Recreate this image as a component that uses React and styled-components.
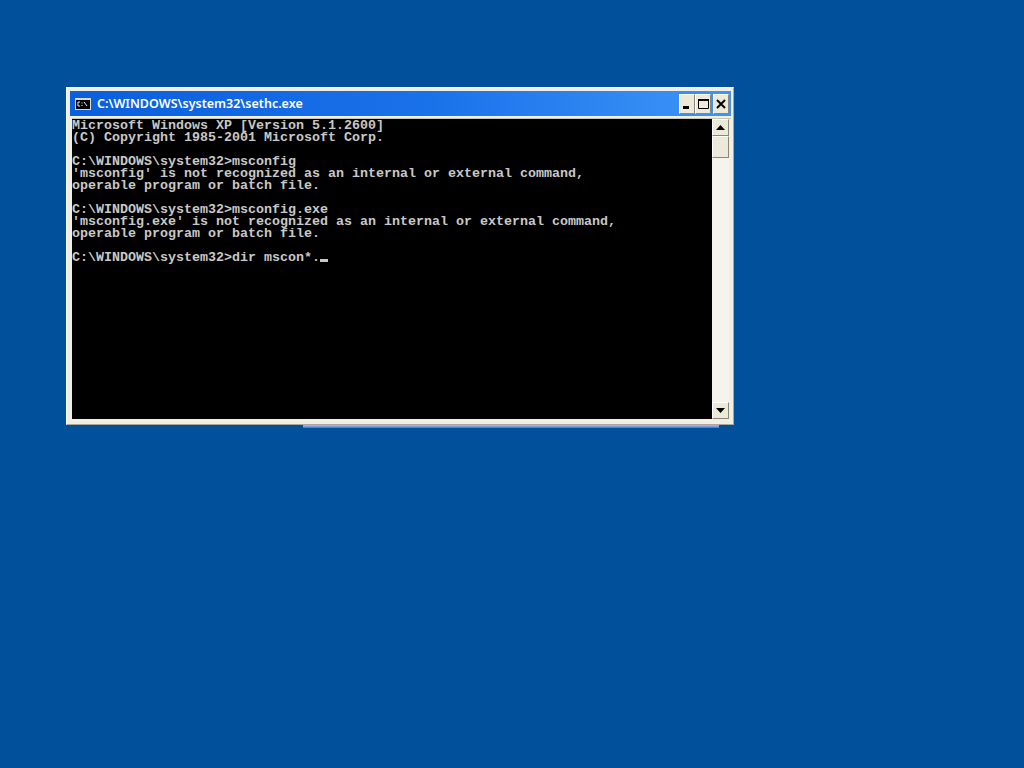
import React from 'react';
import styled, { createGlobalStyle } from 'styled-components';

const CONSOLE_LINES = [
  'Microsoft Windows XP [Version 5.1.2600]',
  '(C) Copyright 1985-2001 Microsoft Corp.',
  '',
  'C:\\WINDOWS\\system32>msconfig',
  "'msconfig' is not recognized as an internal or external command,",
  'operable program or batch file.',
  '',
  'C:\\WINDOWS\\system32>msconfig.exe',
  "'msconfig.exe' is not recognized as an internal or external command,",
  'operable program or batch file.',
  '',
];

const GlobalStyle = createGlobalStyle`
  html, body {
    margin: 0;
    padding: 0;
    background: #00509c;
  }
`;

const Desktop = styled.div`
  position: relative;
  width: 1024px;
  height: 768px;
  overflow: hidden;
  background: #00509c;
`;

const BehindStrip = styled.div`
  position: absolute;
  left: 303px;
  top: 425px;
  width: 416px;
  height: 3px;
  background: linear-gradient(#aebfee, #8097e4 50%, #4f6cd6);
`;

const Window = styled.div`
  position: absolute;
  left: 66px;
  top: 87px;
  width: 668px;
  height: 338px;
  box-sizing: border-box;
  padding: 3px 2px 0 3px;
  display: flex;
  flex-direction: column;
  background: #f1efe4;
  border-top: 1px solid #f8f7f0;
  border-left: 1px solid #fbfbf8;
  border-right: 1px solid #aca899;
  border-bottom: 1px solid #aca899;
`;

const TitleBar = styled.div`
  height: 25px;
  flex: none;
  display: flex;
  align-items: center;
  padding: 0 2px 0 5px;
  background: linear-gradient(90deg, #0a5fdc 0%, #1a72ea 55%, #3d95f8 100%);
`;

const TitleText = styled.span`
  margin-left: 6px;
  flex: 1;
  color: #fff;
  font: 600 12.5px/25px 'Noto Sans', 'Liberation Sans', sans-serif;
  white-space: nowrap;
`;

const ButtonGroup = styled.div`
  display: flex;
  align-items: center;
`;

const WinButton = styled.div`
  box-sizing: border-box;
  width: 16px;
  height: 20px;
  margin-left: ${(p) => p.$gap || 0}px;
  display: flex;
  align-items: center;
  justify-content: center;
  background: #ece9d8;
  border-top: 1px solid #fff;
  border-left: 1px solid #fff;
  border-right: 1px solid #8a8778;
  border-bottom: 1px solid #8a8778;
`;

const Body = styled.div`
  margin-top: 2px;
  margin-left: 2px;
  display: flex;
  border-top: 1px solid #c9c6b8;
`;

const ConsoleArea = styled.div`
  box-sizing: border-box;
  width: 640px;
  height: 300px;
  padding-top: 1px;
  flex: none;
  background: #000;
`;

const ConsoleLine = styled.div`
  height: 12px;
  color: #c8c8c8;
  font: 700 13.33px/12px 'Liberation Mono', 'Courier New', monospace;
  white-space: pre;
`;

const Cursor = styled.span`
  display: inline-block;
  width: 8px;
  height: 3px;
  background: #c8c8c8;
  vertical-align: -1px;
`;

const ScrollBar = styled.div`
  width: 17px;
  height: 300px;
  flex: none;
  display: flex;
  flex-direction: column;
  background-color: #f4f3ee;
  background-image: radial-gradient(#dcd9cb 40%, transparent 45%);
  background-size: 2px 2px;
`;

const ScrollButton = styled.div`
  box-sizing: border-box;
  width: 17px;
  height: 17px;
  flex: none;
  display: flex;
  align-items: center;
  justify-content: center;
  background: #ece9d8;
  border-top: 1px solid #fff;
  border-left: 1px solid #fff;
  border-right: 1px solid #8a8778;
  border-bottom: 1px solid #8a8778;
`;

const ScrollThumb = styled(ScrollButton)`
  height: 22px;
`;

const ScrollSpace = styled.div`
  flex: 1;
`;

const ConsoleIcon = () => (
  <svg width="16" height="12" viewBox="0 0 16 12">
    <rect x="0" y="0" width="16" height="12" fill="#d8d8d8" />
    <rect x="1" y="2" width="14" height="9" fill="#000" />
    <path d="M5 4H3V8H5M7 4.5V5.5M7 7V8M9 4L12 8" stroke="#f0f0f0" strokeWidth="1" fill="none" />
  </svg>
);

const Arrow = ({ down }) => (
  <svg width="9" height="5" viewBox="0 0 9 5">
    <path d={down ? 'M0 0H9L4.5 5Z' : 'M4.5 0L9 5H0Z'} fill="#000" />
  </svg>
);

export default function App() {
  return (
    <Desktop>
      <GlobalStyle />
      <BehindStrip />
      <Window>
        <TitleBar>
          <ConsoleIcon />
          <TitleText>C:\WINDOWS\system32\sethc.exe</TitleText>
          <ButtonGroup>
            <WinButton>
              <svg width="10" height="14" viewBox="0 0 10 14">
                <rect x="1" y="9" width="6" height="3" fill="#000" />
              </svg>
            </WinButton>
            <WinButton>
              <svg width="11" height="10" viewBox="0 0 11 10">
                <path d="M0.5 1.5H10.5V9.5H0.5Z" fill="none" stroke="#000" />
                <rect x="0" y="0" width="11" height="2" fill="#000" />
              </svg>
            </WinButton>
            <WinButton $gap={2}>
              <svg width="10" height="10" viewBox="0 0 10 10">
                <path d="M1 1L9 9M9 1L1 9" stroke="#000" strokeWidth="2" />
              </svg>
            </WinButton>
          </ButtonGroup>
        </TitleBar>
        <Body>
          <ConsoleArea>
            {CONSOLE_LINES.map((line, i) => (
              <ConsoleLine key={i}>{line}</ConsoleLine>
            ))}
            <ConsoleLine>
              {'C:\\WINDOWS\\system32>dir mscon*.'}
              <Cursor />
            </ConsoleLine>
          </ConsoleArea>
          <ScrollBar>
            <ScrollButton><Arrow /></ScrollButton>
            <ScrollThumb />
            <ScrollSpace />
            <ScrollButton><Arrow down /></ScrollButton>
          </ScrollBar>
        </Body>
      </Window>
    </Desktop>
  );
}
